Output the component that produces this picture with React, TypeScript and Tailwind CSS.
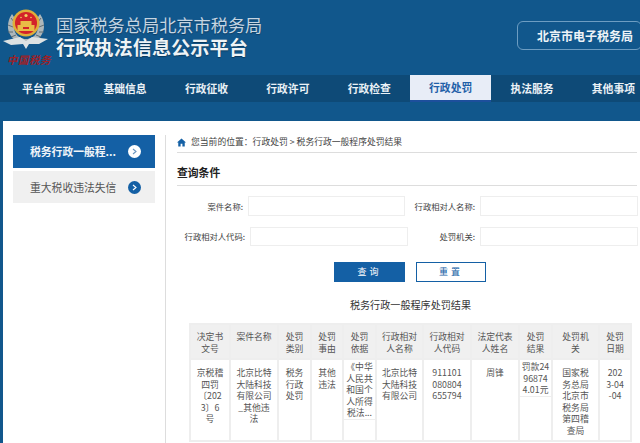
const navItems = ["平台首页", "基础信息", "行政征收", "行政许可", "行政检查", "行政处罚", "执法服务", "其他事项"];

const columns = [
  { head: "决定书\n文号", width: "w-[40px]" },
  { head: "案件名称", width: "w-[48px]" },
  { head: "处罚\n类别", width: "w-[33px]" },
  { head: "处罚\n事由", width: "w-[32px]" },
  { head: "处罚\n依据", width: "w-[33px]" },
  { head: "行政相对\n人名称", width: "w-[47px]" },
  { head: "行政相对\n人代码", width: "w-[48px]" },
  { head: "法定代表\n人姓名", width: "w-[48px]" },
  { head: "处罚\n结果", width: "w-[33px]" },
  { head: "处罚机\n关", width: "w-[47px]" },
  { head: "处罚\n日期", width: "w-[32px]" },
];

const row = [
  "京税稽\n四罚\n〔202\n3〕6\n号",
  "北京比特\n大陆科技\n有限公司\n_其他违\n法",
  "税务\n行政\n处罚",
  "其他\n违法",
  "《中华\n人民共\n和国个\n人所得\n税法...",
  "北京比特\n大陆科技\n有限公司",
  "911101\n080804\n655794",
  "周锋",
  "罚款24\n96874\n4.01元",
  "国家税\n务总局\n北京市\n税务局\n第四稽\n查局",
  "202\n3-04\n-04",
];

function Emblem() {
  return (
    <div className="w-[46px] h-[62px] shrink-0">
      <svg width="46" height="44" viewBox="0 0 46 44" className="block">
        {/* wreath */}
        <path d="M9 8 C2 18 4 31 16 36 L23 38 L30 36 C42 31 44 18 37 8 L33 14 C38 24 32 33 23 33 C14 33 8 24 13 14 Z" fill="#aeb7ba" />
        <path d="M8 12 L11 16 M5 19 L10 21 M5 26 L10 26 M8 31 L13 29 M38 12 L35 16 M41 19 L36 21 M41 26 L36 26 M38 31 L33 29" stroke="#5f6d72" strokeWidth="1" />
        {/* wings */}
        <path d="M0 35 L17 31 L23 35 L29 31 L45 33 L36 38 L26 38 L23 43 L20 38 L8 39 Z" fill="#dde2e3" />
        {/* shield */}
        <circle cx="23" cy="17" r="13.5" fill="#dfae3a" />
        <circle cx="23" cy="17" r="11" fill="#d3222a" />
        <rect x="14.5" y="19" width="17" height="6" fill="#e9bb46" />
        <rect x="17.5" y="15" width="11" height="4" fill="#e9bb46" />
        <rect x="20" y="21" width="6" height="2" fill="#d3222a" />
        <circle cx="23" cy="9.5" r="1.6" fill="#f2d060" />
        <circle cx="18" cy="11.5" r="0.8" fill="#f2d060" />
        <circle cx="28" cy="11.5" r="0.8" fill="#f2d060" />
      </svg>
      <div className="text-[10.5px] leading-none text-[#9c2128] font-bold italic whitespace-nowrap mt-[5px] ml-[4px] tracking-[0.5px] [font-family:'Noto_Sans_CJK_SC',serif]">
        中国税务
      </div>
    </div>
  );
}

function Chevron({ inverted }: { inverted?: boolean }) {
  return (
    <span className={`w-[13px] h-[13px] rounded-full flex items-center justify-center ${inverted ? "bg-white" : "bg-[#1460a5]"}`}>
      <svg width="5" height="7" viewBox="0 0 5 7" fill="none">
        <path d="M1 1 L4 3.5 L1 6" stroke={inverted ? "#6d97c0" : "#ffffff"} strokeWidth="1.1" />
      </svg>
    </span>
  );
}

function Field({ label, labelWidth, inputWidth }: { label: string; labelWidth: string; inputWidth: string }) {
  return (
    <div className="flex items-center">
      <span className={`${labelWidth} text-right text-[8.3px] text-[#444] whitespace-nowrap`}>{label}</span>
      <div className={`${inputWidth} h-full border border-[#eeeeee] bg-white ml-[5px]`} />
    </div>
  );
}

export default function App() {
  return (
    <div className="h-[443px] w-[640px] overflow-hidden bg-[#11578c] [font-family:'Noto_Sans_CJK_SC','Liberation_Sans',sans-serif]">
      {/* Header */}
      <header className="h-[75px] flex items-start">
        <div className="ml-[3px] mt-[6px]">
          <Emblem />
        </div>
        <div className="ml-[7px] mt-[13px]">
          <div className="text-[17.2px] leading-[24px] text-[#c5d5e2] whitespace-nowrap [text-shadow:0_1px_1px_rgba(0,0,0,0.3)]">
            国家税务总局北京市税务局
          </div>
          <div className="text-[19.2px] leading-[20px] font-bold text-[#eef3f6] whitespace-nowrap [text-shadow:0_1px_1px_rgba(0,0,0,0.35)]">
            行政执法信息公示平台
          </div>
        </div>
        <div className="ml-auto mt-[21px] h-[29px] w-[125px] -mr-[2px] rounded-[6px] border border-[#6d9dc2] flex items-center pl-[19px] text-[12px] font-bold text-[#eef3f7] whitespace-nowrap">
          北京市电子税务局
        </div>
      </header>

      {/* Nav */}
      <nav className="h-[27px] bg-[#0e4a77] pl-[3px] flex overflow-hidden">
        {navItems.map((item) =>
          item === "行政处罚" ? (
            <div
              key={item}
              className="w-[81.4px] shrink-0 h-[27px] bg-[#e8edf7] border-b-2 border-[#1d4f9c] flex items-center justify-center text-[10.8px] font-bold text-[#1f5fa8] whitespace-nowrap"
            >
              {item}
            </div>
          ) : (
            <div key={item} className="w-[81.4px] shrink-0 flex items-center justify-center text-[10.8px] font-bold text-[#eaf1f6] whitespace-nowrap">
              {item}
            </div>
          ),
        )}
      </nav>

      {/* Content */}
      <main className="mt-[19px] ml-[3px] h-[322px] bg-white flex pt-[14px] pl-[10px]">
        <aside className="w-[142px] shrink-0">
          <div className="h-[33px] bg-[#1460a5] flex items-center justify-between pl-[17px] pr-[14px] text-[10.8px] font-bold text-[#f0f4f8] whitespace-nowrap">
            税务行政一般程...
            <Chevron inverted />
          </div>
          <div className="h-[32px] mt-[3px] bg-[#f0f0f0] flex items-center justify-between pl-[17px] pr-[14px] text-[10.8px] text-[#555] whitespace-nowrap">
            重大税收违法失信
            <Chevron />
          </div>
        </aside>

        <div className="ml-[10px] w-[472px] shrink-0 border-l border-[#dddddd] pl-[11px]">
          <div className="h-[18px] border-b border-[#dddddd] flex items-center text-[8.8px] text-[#444] whitespace-nowrap">
            <svg width="9" height="9" viewBox="0 0 10 10" className="mr-[5px] mb-[3px]">
              <path d="M5 0.5 L10 5 H8.6 V9.5 H6 V6.5 H4 V9.5 H1.4 V5 H0 Z" fill="#1460a5" />
            </svg>
            <span className="mb-[3px]">您当前的位置：行政处罚 &gt; 税务行政一般程序处罚结果</span>
          </div>
          <div className="h-[33px] pt-[6px] border-b border-[#dddddd] flex items-center text-[10.8px] font-bold text-[#222]">查询条件</div>

          {/* Query form */}
          <div className="-ml-[11px] w-[474px] mt-[10px] space-y-[11px]">
            <div className="flex h-[20px]">
              <Field label="案件名称:" labelWidth="w-[77px]" inputWidth="w-[157px]" />
              <Field label="行政相对人名称:" labelWidth="w-[70px]" inputWidth="w-[158px]" />
            </div>
            <div className="flex h-[19px]">
              <Field label="行政相对人代码:" labelWidth="w-[79px]" inputWidth="w-[158px]" />
              <Field label="处罚机关:" labelWidth="w-[67px]" inputWidth="w-[158px]" />
            </div>
          </div>

          <div className="-ml-[11px] mt-[16px] pl-[168px] flex items-center gap-[11px]">
            <div className="w-[71px] h-[20px] bg-[#1460a5] flex items-center justify-center text-[9px] tracking-[3px] text-white">查询</div>
            <div className="w-[70px] h-[20px] -mt-[1px] border border-[#1460a5] flex items-center justify-center text-[9px] tracking-[3px] text-[#1460a5]">重置</div>
          </div>

          <div className="-ml-[11px] mt-[15px] w-[474px] pl-[15px] text-center text-[10.1px] leading-[16px] text-[#333]">税务行政一般程序处罚结果</div>

          {/* Results */}
          <table className="ml-[12px] mt-[10px] table-fixed border-collapse w-[441px] text-[8.8px] leading-[11.5px] text-[#555] text-center">
            <thead>
              <tr className="h-[35px] bg-[#f0f0f0]">
                {columns.map((col) => (
                  <th key={col.head} className={`${col.width} border-2 border-[#eeeeee] font-normal align-top pt-[6px] whitespace-pre-line`}>
                    {col.head}
                  </th>
                ))}
              </tr>
            </thead>
            <tbody>
              <tr className="h-[82px]">
                {row.map((cell, i) =>
                  i === 4 || i === 8 ? (
                    <td key={i} className="border-2 border-[#eeeeee] align-top p-0">
                      <div className="border-b border-[#eeeeee] pt-[1px] whitespace-pre-line">{cell}</div>
                    </td>
                  ) : (
                    <td key={i} className="border-2 border-[#eeeeee] align-top pt-[7px] whitespace-pre-line">
                      {cell}
                    </td>
                  ),
                )}
              </tr>
            </tbody>
          </table>
        </div>
      </main>
    </div>
  );
}
